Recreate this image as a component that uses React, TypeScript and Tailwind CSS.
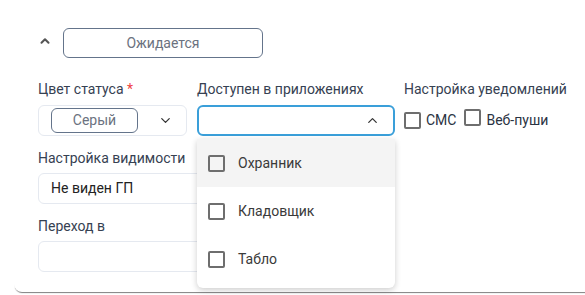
import { ChevronDown, ChevronUp } from 'lucide-react';

function Box() {
  return <span className="inline-block w-[17px] h-[17px] border-2 border-[#6e6e6e] rounded-[2px] shrink-0" />;
}

const apps = ['Охранник', 'Кладовщик', 'Табло'];

export default function App() {
  return (
    <div className="w-[585px] h-[295px] bg-white overflow-hidden" style={{ fontFamily: 'Roboto, "Noto Sans", sans-serif' }}>
      <div className="ml-[14px] mt-[6px] w-[620px] h-[286px] bg-white rounded-lg shadow-[0_2px_1px_-1px_rgba(0,0,0,0.5)] pl-6 pt-[22px] relative">
        {/* header */}
        <div className="flex items-center gap-[11px]">
          <ChevronUp className="w-[14px] h-[14px] text-[#555] -mt-[5px]" strokeWidth={3.5} />
          <div className="w-[200px] h-[30px] border border-[#64748b] rounded-md flex items-center justify-center text-[14px] text-[#6b7280]">
            Ожидается
          </div>
        </div>

        {/* row 1 */}
        <div className="flex mt-[21px] text-[14px] text-[#364152]">
          <div className="w-[149px]">
            <div className="h-[20px] leading-[20px]">
              Цвет статуса <span className="text-[#ef4444]">*</span>
            </div>
            <div className="mt-[6px] h-[31px] border border-[#e5e9f0] rounded-md flex items-center pl-3 pr-[13px] justify-between">
              <div className="w-[87px] h-[25px] border border-[#64748b] rounded-md flex items-center justify-center text-[#6b7280]">
                Серый
              </div>
              <ChevronDown className="w-[15px] h-[15px] text-[#333]" strokeWidth={2} />
            </div>
          </div>
          <div className="w-[198px] ml-[10px] relative">
            <div className="h-[20px] leading-[20px]">Доступен в приложениях</div>
            <div className="mt-[6px] h-[31px] border-2 border-[#3a9fd9] rounded-md flex items-center justify-end pr-[13px]">
              <ChevronUp className="w-[15px] h-[15px] text-[#333]" strokeWidth={2} />
            </div>
            <div className="absolute z-10 left-0 top-[60px] w-[198px] bg-white rounded-b-md shadow-[0_2px_6px_rgba(0,0,0,0.2)] pb-[5px]">
              {apps.map((a, i) => (
                <div
                  key={a}
                  className={`flex items-center h-[48px] pl-[11px] gap-[13px] text-[14px] text-[#3a3a3a] ${i === 0 ? 'bg-[#f4f4f4]' : ''}`}
                >
                  <Box />
                  {a}
                </div>
              ))}
            </div>
          </div>
          <div className="ml-[9px]">
            <div className="h-[20px] leading-[20px]">Настройка уведомлений</div>
            <div className="mt-[10px] flex items-center text-[#2a3342]">
              <Box />
              <span className="ml-[5px]">СМС</span>
              <span className="ml-[8px]"><Box /></span>
              <span className="ml-[5px]">Веб-пуши</span>
            </div>
          </div>
        </div>

        {/* row 2 */}
        <div className="mt-[12px] text-[14px] text-[#364152] w-[357px]">
          <div className="h-[20px] leading-[20px]">Настройка видимости</div>
          <div className="mt-[5px] h-[31px] border border-[#e5e9f0] rounded-md flex items-center pl-3 text-[#222]">
            Не виден ГП
          </div>
        </div>

        <div className="mt-[12px] text-[14px] text-[#364152] w-[357px]">
          <div className="h-[20px] leading-[20px]">Переход в</div>
          <div className="mt-[5px] h-[31px] border border-[#e5e9f0] rounded-md" />
        </div>
      </div>
    </div>
  );
}
